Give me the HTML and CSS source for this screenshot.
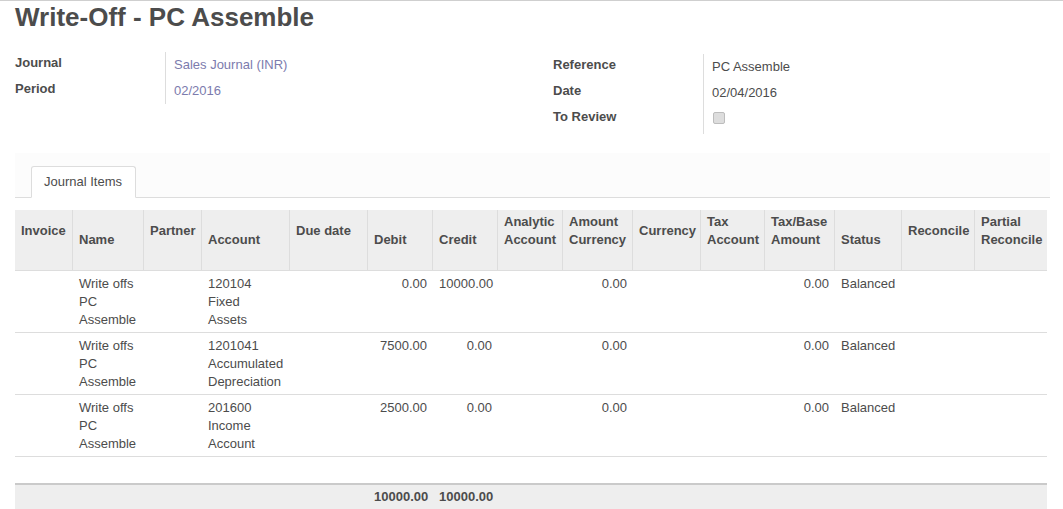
FILE: index.html
```html
<!DOCTYPE html>
<html>
<head>
<meta charset="utf-8">
<link rel="stylesheet" href="styles.css">
</head>
<body>
<div class="sheet">
  <h1 class="title">Write-Off - PC Assemble</h1>
  <div class="fields">
    <div class="group group-left">
      <div class="label">Journal</div>
      <div class="value"><span class="link">Sales Journal (INR)</span></div>
      <div class="label">Period</div>
      <div class="value"><span class="link">02/2016</span></div>
    </div>
    <div class="group group-right">
      <div class="label">Reference</div>
      <div class="value">PC Assemble</div>
      <div class="label">Date</div>
      <div class="value">02/04/2016</div>
      <div class="label">To Review</div>
      <div class="value"><span class="checkbox"></span></div>
    </div>
  </div>
  <div class="notebook">
    <div class="tab">Journal Items</div>
  </div>
  <table class="lines">
    <colgroup>
      <col class="c57"><col class="c71"><col class="c58"><col class="c88"><col class="c78">
      <col class="c65"><col class="c65"><col class="c65"><col class="c70"><col class="c68">
      <col class="c64"><col class="c70"><col class="c67"><col class="c73"><col class="c73">
    </colgroup>
    <thead>
      <tr>
        <th class="mid first">Invoice</th>
        <th class="low">Name</th>
        <th class="mid">Partner</th>
        <th class="low">Account</th>
        <th class="mid">Due date</th>
        <th class="low">Debit</th>
        <th class="low">Credit</th>
        <th>Analytic Account</th>
        <th>Amount Currency</th>
        <th class="mid">Currency</th>
        <th>Tax Account</th>
        <th>Tax/Base Amount</th>
        <th class="low">Status</th>
        <th class="mid">Reconcile</th>
        <th>Partial Reconcile</th>
      </tr>
    </thead>
    <tbody>
      <tr>
        <td></td>
        <td>Write offs<br>PC<br>Assemble</td>
        <td></td>
        <td>120104<br>Fixed<br>Assets</td>
        <td></td>
        <td class="num">0.00</td>
        <td class="num">10000.00</td>
        <td></td>
        <td class="num">0.00</td>
        <td></td>
        <td></td>
        <td class="num">0.00</td>
        <td>Balanced</td>
        <td></td>
        <td></td>
      </tr>
      <tr>
        <td></td>
        <td>Write offs<br>PC<br>Assemble</td>
        <td></td>
        <td>1201041<br>Accumulated<br>Depreciation</td>
        <td></td>
        <td class="num">7500.00</td>
        <td class="num">0.00</td>
        <td></td>
        <td class="num">0.00</td>
        <td></td>
        <td></td>
        <td class="num">0.00</td>
        <td>Balanced</td>
        <td></td>
        <td></td>
      </tr>
      <tr>
        <td></td>
        <td>Write offs<br>PC<br>Assemble</td>
        <td></td>
        <td>201600<br>Income<br>Account</td>
        <td></td>
        <td class="num">2500.00</td>
        <td class="num">0.00</td>
        <td></td>
        <td class="num">0.00</td>
        <td></td>
        <td></td>
        <td class="num">0.00</td>
        <td>Balanced</td>
        <td></td>
        <td></td>
      </tr>
      <tr class="spacer">
        <td colspan="15"></td>
      </tr>
    </tbody>
    <tfoot>
      <tr>
        <td></td><td></td><td></td><td></td><td></td>
        <td class="num">10000.00</td>
        <td class="num">10000.00</td>
        <td></td><td></td><td></td><td></td><td></td><td></td><td></td><td></td>
      </tr>
    </tfoot>
  </table>
</div>
</body>
</html>
```

FILE: styles.css
```css
html, body {
  margin: 0;
  padding: 0;
  background: #fff;
}

body {
  font-family: "Liberation Sans", Arial, Helvetica, sans-serif;
  font-size: 13px;
  color: #4c4c4c;
  border-top: 1px solid #cfcfcf;
}

.sheet {
  width: 1035px;
  padding-left: 15px;
}

.title {
  margin: 0;
  padding-top: 1px;
  font-size: 26px;
  line-height: 30px;
  font-weight: bold;
  color: #4c4c4c;
}

.fields {
  display: flex;
  margin-top: 20px;
}

.group {
  display: grid;
  grid-template-columns: 150px 1fr;
  grid-auto-rows: 26px;
}

.group-left {
  width: 538px;
}

.group-right {
  flex: 1;
  margin-top: 2px;
  grid-template-rows: 26px 26px 28px;
}

.label {
  font-weight: bold;
  line-height: 18px;
  padding: 2px 0 6px 0;
}

.value {
  line-height: 18px;
  padding: 4px 0 4px 8px;
  border-left: 1px solid #ddd;
}

.link {
  color: #7c7bad;
}

.checkbox {
  display: block;
  width: 10px;
  height: 10px;
  margin: 2px 0 0 1px;
  background: #ddd;
  border: 1px solid #bdbdbd;
  border-radius: 2px;
}

.notebook {
  margin-top: 19px;
  padding: 13px 0 0 16px;
  background: #fcfcfc;
  border-bottom: 1px solid #ddd;
  display: flex;
}

.tab {
  line-height: 18px;
  padding: 6px 13px 6px 12px;
  background: #fff;
  border: 1px solid #ddd;
  border-bottom-color: transparent;
  border-radius: 3px 3px 0 0;
  margin-bottom: -1px;
}

.lines {
  margin-top: 12px;
  width: 1032px;
  table-layout: fixed;
  border-collapse: separate;
  border-spacing: 0;
}

.c57 { width: 57px; }
.c58 { width: 58px; }
.c64 { width: 64px; }
.c65 { width: 65px; }
.c67 { width: 67px; }
.c68 { width: 68px; }
.c70 { width: 70px; }
.c71 { width: 71px; }
.c73 { width: 73px; }
.c78 { width: 78px; }
.c88 { width: 88px; }

.lines thead tr {
  height: 61px;
}

.lines th {
  background: #eee;
  font-weight: bold;
  text-align: left;
  vertical-align: top;
  line-height: 18px;
  padding: 3px 4px 0 6px;
  border-left: 1px solid #ddd;
  border-bottom: 1px solid #ddd;
}

.lines th.first {
  border-left: none;
}

.lines th.mid {
  padding-top: 12px;
}

.lines th.low {
  padding-top: 21px;
}

.lines td {
  line-height: 18px;
  vertical-align: top;
  padding: 4px 5px 3px 7px;
  border-bottom: 1px solid #ddd;
  white-space: nowrap;
  overflow: hidden;
}

.lines td.num {
  text-align: right;
}

.lines tr.spacer td {
  height: 26px;
  padding: 0;
  border-bottom: none;
}

.lines tfoot td {
  background: #eee;
  border-top: 2px solid #cacaca;
  border-bottom: none;
  font-weight: bold;
  padding-top: 3px;
  padding-bottom: 7px;
}
```
